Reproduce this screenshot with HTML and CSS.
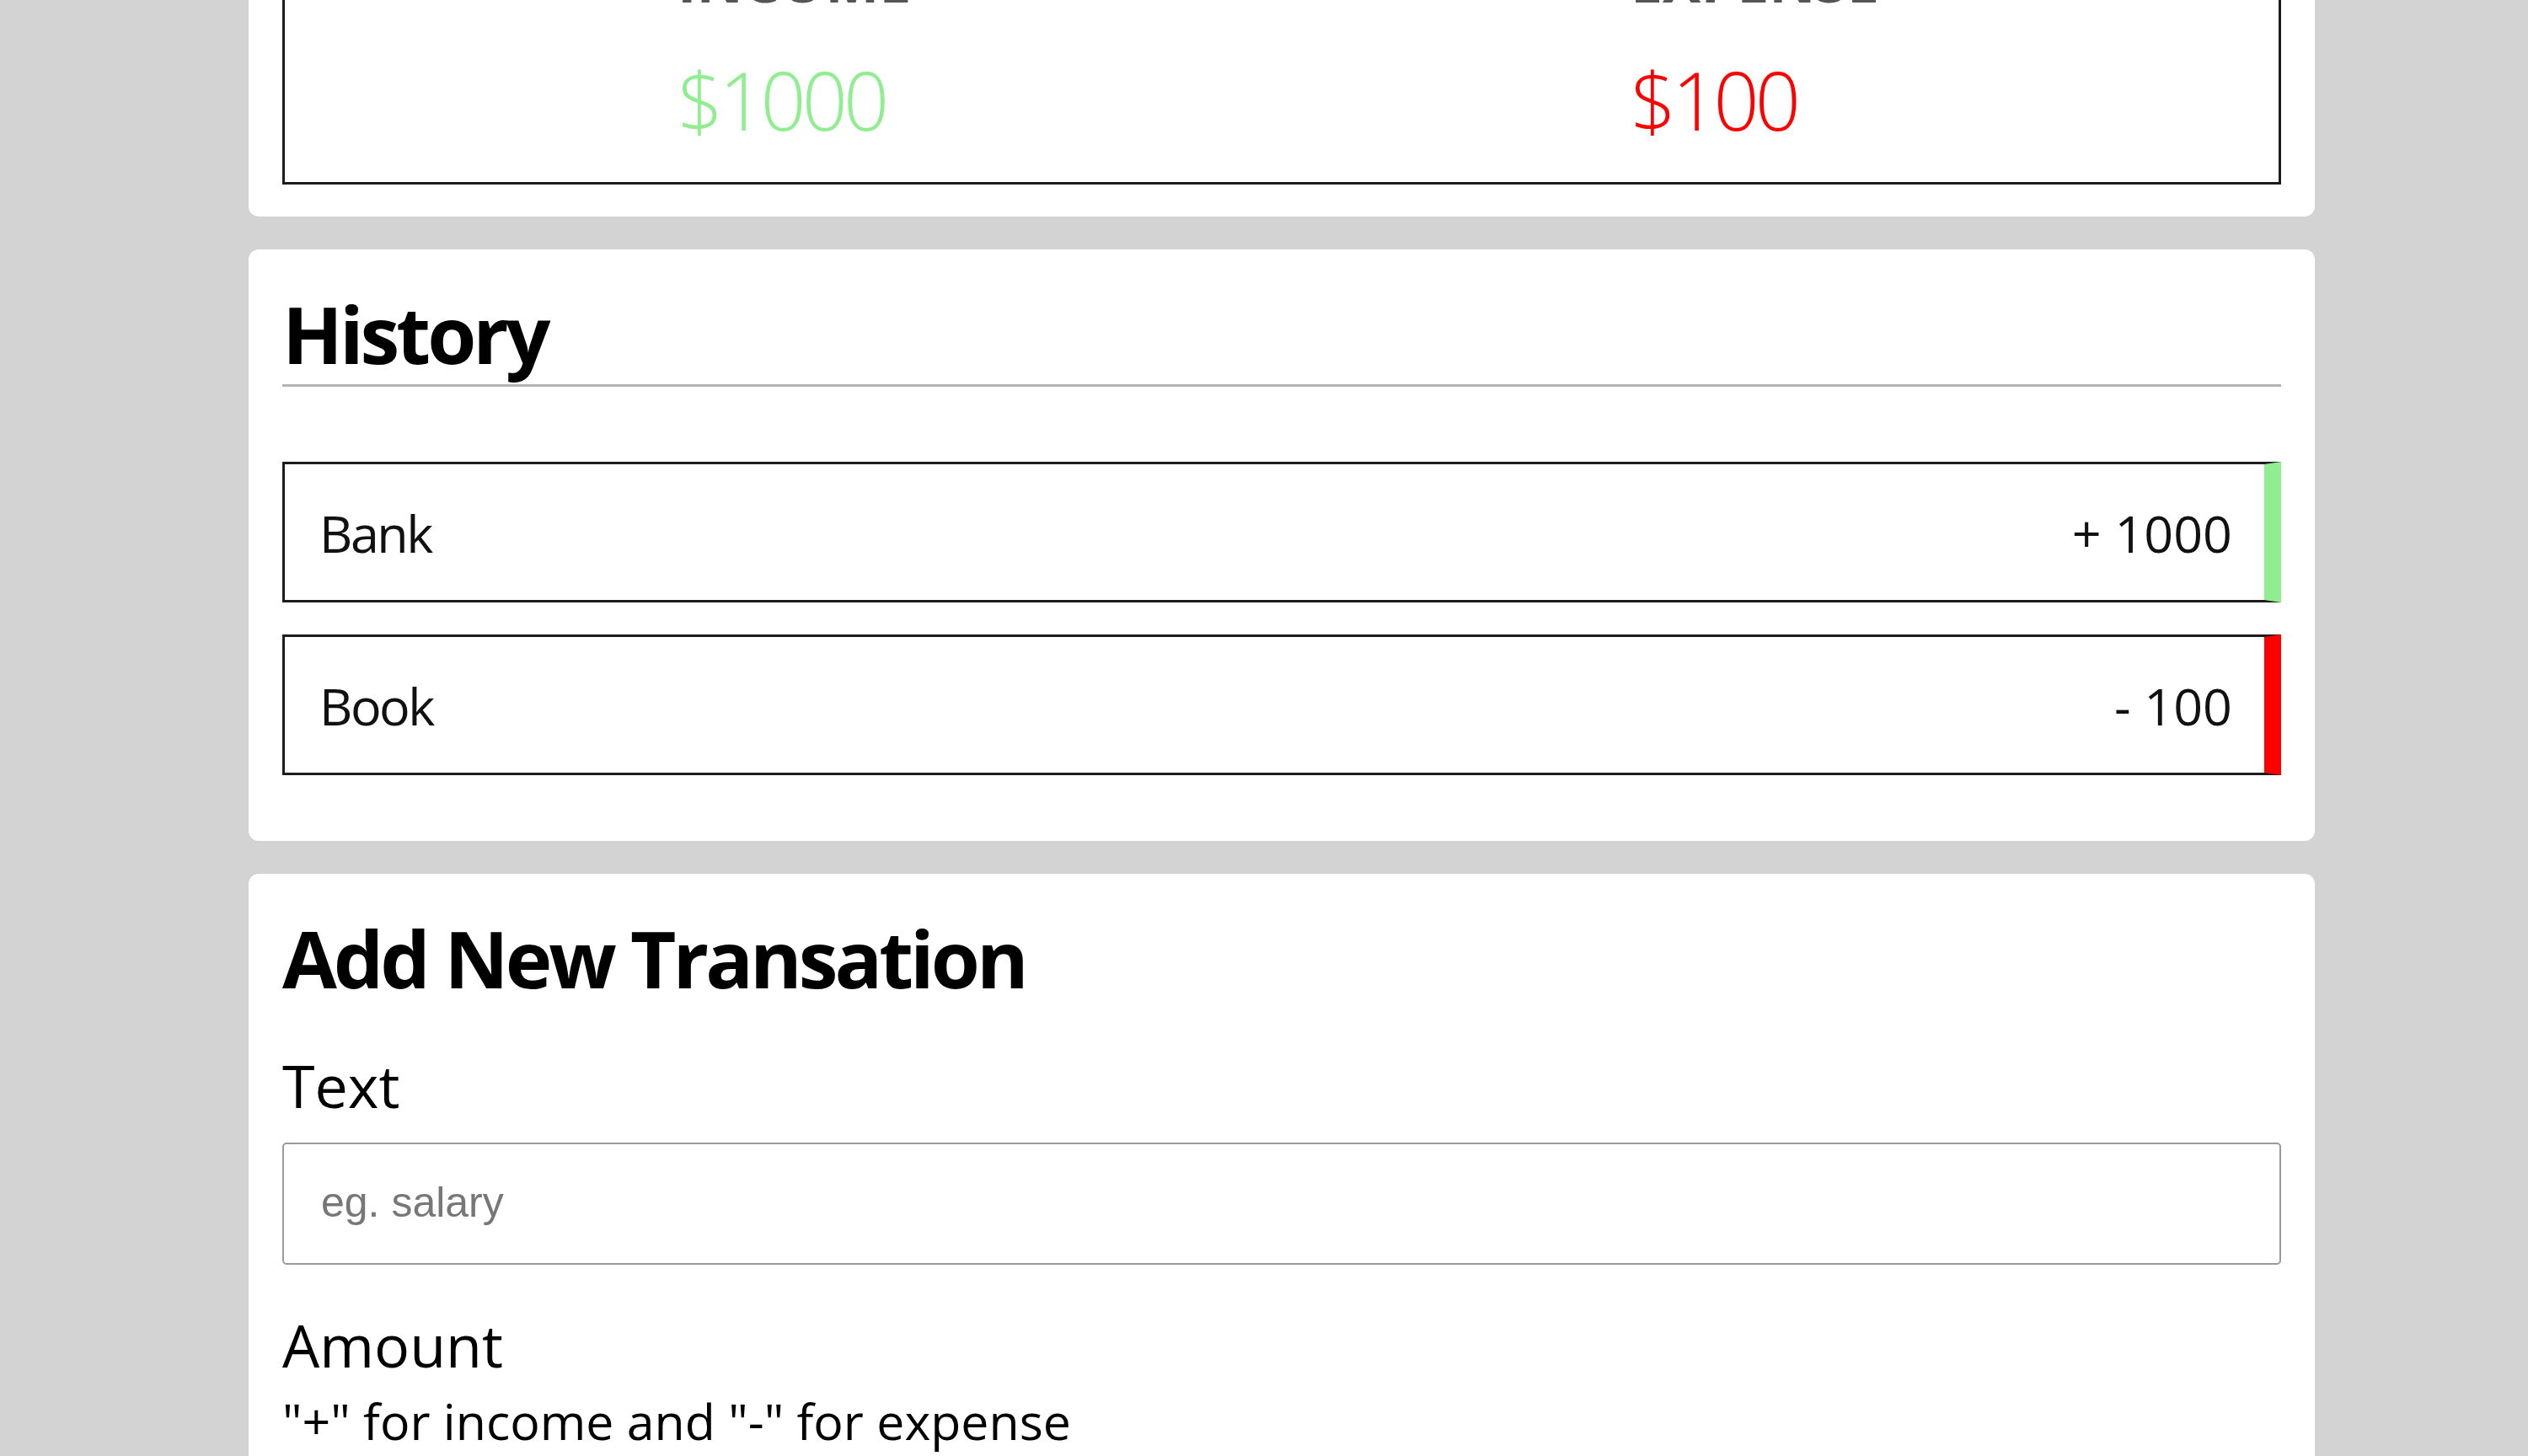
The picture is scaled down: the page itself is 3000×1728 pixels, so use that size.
FILE: index.html
```html
<!DOCTYPE html>
<html lang="en">
<head>
<meta charset="utf-8">
<title>Expense Tracker</title>
<link rel="stylesheet" href="styles.css">
</head>
<body>
<main class="page">
  <section class="card card-summary">
    <div class="summary">
      <div class="stat">
        <h4 class="stat-label">Income</h4>
        <p class="money plus">$1000</p>
      </div>
      <div class="stat">
        <h4 class="stat-label">Expense</h4>
        <p class="money minus">$100</p>
      </div>
    </div>
  </section>

  <section class="card">
    <h3 class="card-title card-title-ruled">History</h3>
    <ul class="list">
      <li class="item item-plus"><span class="item-name">Bank</span><span>+ 1000</span></li>
      <li class="item item-minus"><span class="item-name">Book</span><span>- 100</span></li>
    </ul>
  </section>

  <section class="card">
    <h3 class="card-title">Add New Transation</h3>
    <form class="form">
      <label class="field-label" for="text">Text</label>
      <input class="field-input" id="text" type="text" placeholder="eg. salary">
      <label class="field-label field-label-amount" for="amount">Amount</label>
      <p class="field-help">"+" for income and "-" for expense</p>
    </form>
  </section>
</main>
</body>
</html>
```

FILE: styles.css
```css
* { box-sizing: border-box; }

html, body {
  margin: 0;
  padding: 0;
}

body {
  background: #d3d3d3;
  font-family: "Open Sans", "Noto Sans", sans-serif;
  color: #000;
  overflow: hidden;
}

.page {
  width: 2452px;
  margin: -131px 0 0 295px;
  display: flex;
  flex-direction: column;
  gap: 39px;
}

.card {
  background: #fff;
  border-radius: 12px;
  padding: 38px 40px;
}

/* summary */
.summary {
  border: 3px solid #1c1c1c;
  padding: 40px 0 50px 466px;
  display: grid;
  grid-template-columns: 1131px auto;
}

.stat-label {
  margin: 0;
  font-size: 68px;
  line-height: 54px;
  font-weight: 700;
  text-transform: uppercase;
  color: #555;
}

.money {
  margin: 67px 0 0;
  font-size: 95px;
  line-height: 95px;
  font-weight: 300;
  letter-spacing: -5px;
}

.plus { color: #90ee90; }
.minus { color: #ff0000; }

/* headings */
.card-title {
  margin: 15px 0 0;
  font-size: 94px;
  line-height: 95px;
  font-weight: 700;
  letter-spacing: -4px;
}

.card-title-ruled {
  padding-bottom: 12px;
  border-bottom: 3px solid #b4b4b4;
}

/* history list */
.list {
  list-style: none;
  margin: 89px 0 40px;
  padding: 0;
  display: flex;
  flex-direction: column;
  gap: 38px;
}

.item {
  display: flex;
  justify-content: space-between;
  border: 3px solid #1c1c1c;
  padding: 51px 38px 49px 41px;
  font-size: 61px;
  line-height: 61px;
  color: #111;
}

.item-name { letter-spacing: -2.5px; }

.item-plus { border-right: 20px solid #90ee90; }
.item-minus { border-right: 20px solid #ff0000; }

/* form */
.form {
  display: flex;
  flex-direction: column;
}

.field-label {
  margin-top: 68px;
  font-size: 70px;
  line-height: 70px;
}

.field-label-amount {
  margin-top: 60px;
}

.field-input {
  margin-top: 33px;
  height: 145px;
  width: 100%;
  border: 2px solid #9a9a9a;
  border-radius: 5px;
  padding: 0 44px 4px;
  font-family: "Liberation Sans", Arial, sans-serif;
  font-size: 50px;
  color: #000;
  background: #fff;
}

.field-input::placeholder {
  color: #777;
}

.field-help {
  margin: 26px 0 0;
  font-size: 59px;
  line-height: 59px;
}
```
